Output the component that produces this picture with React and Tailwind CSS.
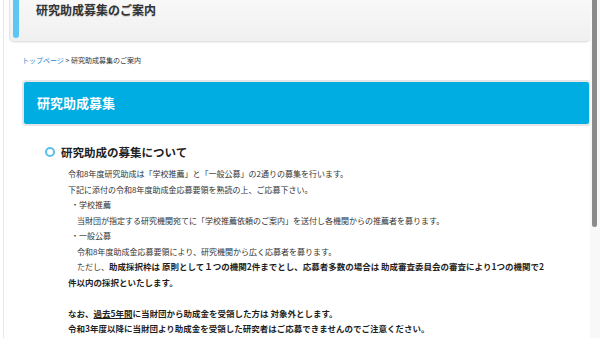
import React from 'react';

const font = { fontFamily: '"Noto Sans CJK JP", "Noto Sans", sans-serif' };

const App = () => {
  return (
    <div className="w-[600px] h-[338px] overflow-hidden flex bg-white font-['Noto_Sans_CJK_JP',sans-serif]" style={font}>
      {/* page column */}
      <div className="flex-1 pl-[3px]">
        <div className="border-l border-[#e8e8e8] h-full">
          {/* page title box */}
          <div className="ml-[5px] mr-[-1px] h-[42px] flex items-start border border-t-0 border-[#e3e3e3] rounded-b-[5px] bg-gradient-to-b from-[#f8f8f8] to-[#f0f0f0] shadow-[0_1px_1px_rgba(0,0,0,0.06)]">
            <div className="ml-[3px] w-[6px] h-[38px] rounded-b-[3px] bg-[#5ec6f3]" />
            <h1 className="ml-[17px] mt-[3px] text-[12px] leading-[14px] font-bold text-[#333] [text-shadow:0_1px_1px_rgba(0,0,0,0.15)]">
              研究助成募集のご案内
            </h1>
          </div>

          {/* breadcrumb */}
          <div className="pl-[18px] mt-[13px] text-[7px] leading-[10px] text-[#333]">
            <span className="text-[#2b8ad3]">トップページ</span>
            <span> &gt; </span>
            <span>研究助成募集のご案内</span>
          </div>

          {/* blue section title */}
          <div className="ml-[18px] mr-[-1px] mt-[15px] border-2 border-[#e6e6e6] rounded-[4px]">
            <div className="h-[42px] bg-[#00ade2] rounded-[2px] flex items-center pl-[13px]">
              <h2 className="text-[13px] font-bold text-white">研究助成募集</h2>
            </div>
          </div>

          {/* heading */}
          <div className="mt-[18px] pl-[41px] flex items-center h-[16px]">
            <span className="w-[10px] h-[10px] rounded-full border-[2.5px] border-[#5bbfe9]" />
            <h3 className="ml-[6px] text-[11.5px] leading-[16px] font-bold text-[#222]">研究助成の募集について</h3>
          </div>

          {/* body */}
          <div className="mt-[6px] pl-[64px] text-[8px] leading-[15.5px] text-[#333] whitespace-nowrap">
            <p>令和8年度研究助成は「学校推薦」と「一般公募」の2通りの募集を行います。</p>
            <p>下記に添付の令和8年度助成金応募要領を熟読の上、ご応募下さい。</p>
            <p className="pl-[3px]">・学校推薦</p>
            <p className="pl-[9px]">当財団が指定する研究機関宛てに「学校推薦依頼のご案内」を送付し各機関からの推薦者を募ります。</p>
            <p className="pl-[3px]">・一般公募</p>
            <p className="pl-[9px]">令和8年度助成金応募要領により、研究機関から広く応募者を募ります。</p>
            <p className="pl-[9px]">
              ただし、
              <b className="text-[8.5px] text-[#1f1f1f]">
                助成採択枠は 原則として１つの機関2件までとし、応募者多数の場合は 助成審査委員会の審査により1つの機関で2
              </b>
            </p>
            <p className="text-[8.5px] font-bold text-[#1f1f1f]">件以内の採択といたします。</p>
            <p>&nbsp;</p>
            <p className="text-[8.5px] font-bold text-[#1f1f1f]">
              なお、<span className="underline">過去5年間</span>に当財団から助成金を受領した方は 対象外とします。
            </p>
            <p className="text-[8.5px] font-bold text-[#1f1f1f]">
              令和3年度以降に当財団より助成金を受領した研究者はご応募できませんのでご注意ください。
            </p>
          </div>
        </div>
      </div>

      {/* scrollbar */}
      <div className="w-[10px] h-full bg-[#f8f8f8]">
        <div className="ml-[2px] w-[5px] h-[227px] rounded-b-[3px] bg-[#8b8b8b]" />
      </div>
    </div>
  );
};

export default App;
